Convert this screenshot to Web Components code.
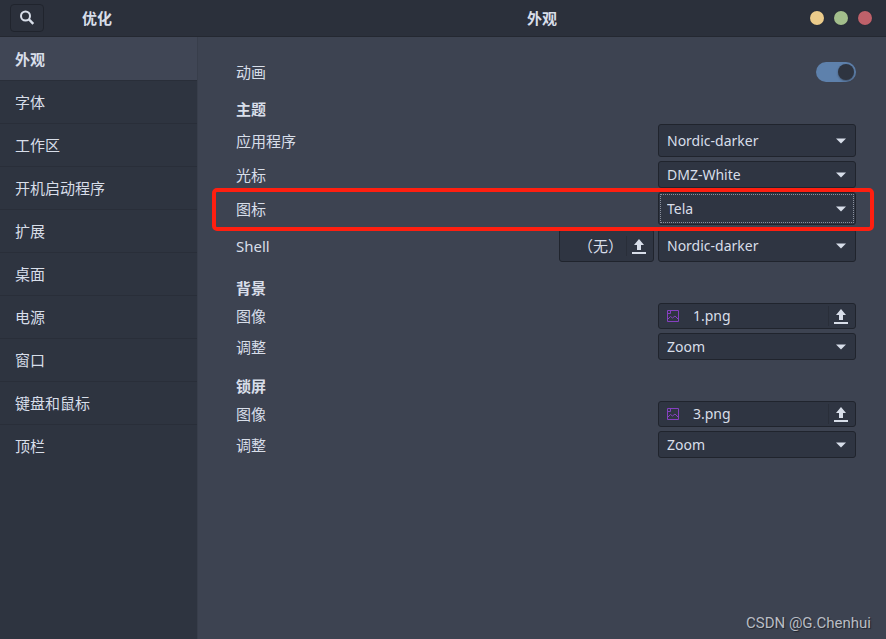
<!DOCTYPE html>
<html lang="zh-CN">
<head>
<meta charset="utf-8">
<meta name="viewport" content="width=device-width, initial-scale=1">
<title>优化</title>
<style>
    :root {
        --header: #2b303b;
        --sidebar: #2e3440;
        --content: #3d4351;
        --selected: #404655;
        --control: #2f3542;
        --line: #20242d;
        --separator: #292e39;
        --text: #d8dee9;
        --accent: #5e81ac;
        --side-width: 198px;
    }
    body {
        margin: 0;
        background: var(--content);
        color: var(--text);
        font: 15px/22px "Noto Sans", "Noto Sans CJK SC", sans-serif;
    }
</style>
</head>
<body>

<tweaks-window>
    <tweaks-header slot="header" app="优化" page="外观"></tweaks-header>
    <side-menu slot="side" items="外观,字体,工作区,开机启动程序,扩展,桌面,电源,窗口,键盘和鼠标,顶栏"></side-menu>

    <switch-row label="动画"></switch-row>
    <setting-group heading="主题">
        <choice-row label="应用程序" value="Nordic-darker" tall></choice-row>
        <choice-row label="光标" value="DMZ-White"></choice-row>
        <choice-row label="图标" value="Tela" tall focused marked></choice-row>
        <choice-row label="Shell" value="Nordic-darker" tall>
            <file-button name="（无）" compact></file-button>
        </choice-row>
    </setting-group>
    <setting-group heading="背景">
        <file-row label="图像" name="1.png"></file-row>
        <choice-row label="调整" value="Zoom"></choice-row>
    </setting-group>
    <setting-group heading="锁屏">
        <file-row label="图像" name="3.png"></file-row>
        <choice-row label="调整" value="Zoom"></choice-row>
    </setting-group>

    <span slot="credit">CSDN @G.Chenhui</span>
</tweaks-window>

<script>
const rowStyle = `
    :host {
        display: flex;
        align-items: center;
        gap: 4px;
        position: relative;
    }
    * {
        box-sizing: border-box;
    }
    label {
        flex: 1;
    }
`

class TweaksWindow extends HTMLElement {

    constructor() {
        super()
        this.attachShadow({ mode: 'open' }).innerHTML = `
            <style>
                :host {
                    display: flex;
                    flex-direction: column;
                    min-height: 100vh;
                    position: relative;
                }
                .body {
                    flex: 1;
                    display: grid;
                    grid-template-columns: var(--side-width) 1fr;
                }
                main {
                    padding: 24px 30px;
                    padding-left: 38px;
                }
                .credit {
                    position: absolute;
                    right: 15px;
                    bottom: 5px;
                    color: #b9bdc4;
                    font-family: Roboto, "Liberation Sans", sans-serif;
                    text-shadow: 1px 1px 1px #20242d;
                }
            </style>
            <slot name="header"></slot>
            <div class="body">
                <slot name="side"></slot>
                <main><slot></slot></main>
            </div>
            <div class="credit"><slot name="credit"></slot></div>
        `
    }
}

class TweaksHeader extends HTMLElement {

    constructor() {
        super()
        this.attachShadow({ mode: 'open' }).innerHTML = `
            <style>
                :host {
                    display: grid;
                    grid-template-columns: var(--side-width) 1fr;
                    background: var(--header);
                    border-bottom: 1px solid #242831;
                }
                .part {
                    display: grid;
                    grid-template-columns: 1fr auto 1fr;
                    align-items: center;
                    height: 36px;
                    padding: 0 14px;
                }
                .app {
                    padding-left: 10px;
                }
                h1, h2 {
                    margin: 0;
                    font-size: 15px;
                    font-weight: 700;
                }
                h2 {
                    grid-column: 2;
                }
                button {
                    padding: 0;
                }
                .search {
                    display: grid;
                    place-items: center;
                    width: 34px;
                    height: 28px;
                    border: 1px solid var(--line);
                    border-radius: 4px;
                    background: none;
                    color: inherit;
                }
                .dots {
                    display: flex;
                    justify-content: flex-end;
                    gap: 10px;
                }
                .dots button {
                    width: 14px;
                    height: 14px;
                    border: 0;
                    border-radius: 50%;
                    background: var(--dot);
                    box-shadow: 0 0 1px var(--line);
                }
            </style>
            <div class="part app">
                <button class="search" aria-label="搜索">
                    <svg width="16" height="16" viewBox="0 0 16 16" fill="none" stroke="currentColor" stroke-width="2">
                        <circle cx="6.500" cy="6" r="4.500"/>
                        <path d="M9.700 9.200 14.300 13.800" stroke-width="2.400"/>
                    </svg>
                </button>
                <h1>${this.getAttribute('app')}</h1>
            </div>
            <div class="part">
                <h2>${this.getAttribute('page')}</h2>
                <div class="dots">
                    <button aria-label="最小化" style="--dot: #ebcb8b"></button>
                    <button aria-label="最大化" style="--dot: #a3be8c"></button>
                    <button aria-label="关闭" style="--dot: #bf616a"></button>
                </div>
            </div>
        `
    }
}

class SideMenu extends HTMLElement {

    constructor() {
        super()
        const items = this.getAttribute('items').split(',')
        this.attachShadow({ mode: 'open' }).innerHTML = `
            <style>
                :host {
                    display: block;
                    padding-top: 1px;
                    background: var(--sidebar);
                    border-right: 1px solid #383e4b;
                }
                a {
                    display: block;
                    padding: 10px 15px;
                    border-bottom: 1px solid var(--separator);
                    color: inherit;
                    text-decoration: none;
                }
                a:last-child {
                    border-bottom: 0;
                }
                a[aria-current] {
                    background: var(--selected);
                    box-shadow: 0 -1px var(--selected);
                    font-weight: 700;
                }
            </style>
            <nav>${items.map((item, i) => this.buildLink(item, i === 0)).join('')}</nav>
        `
    }

    buildLink(item, current) {
        return `<a href="#${item}" ${current ? 'aria-current="page"' : ''}>${item}</a>`
    }
}

class SettingGroup extends HTMLElement {

    constructor() {
        super()
        this.attachShadow({ mode: 'open' }).innerHTML = `
            <style>
                :host {
                    display: flex;
                    flex-direction: column;
                    gap: 4px;
                    margin-top: 15px;
                }
                h3 {
                    margin: 0;
                    font-size: 15px;
                    font-weight: 700;
                }
            </style>
            <h3>${this.getAttribute('heading')}</h3>
            <slot></slot>
        `
    }
}

class SwitchRow extends HTMLElement {

    constructor() {
        super()
        this.attachShadow({ mode: 'open' }).innerHTML = `
            <style>
                ${rowStyle}
                input {
                    appearance: none;
                    display: flex;
                    justify-content: flex-start;
                    width: 40px;
                    height: 20px;
                    margin: 0;
                    padding: 2px;
                    border-radius: 10px;
                    background: var(--control);
                }
                input:checked {
                    justify-content: flex-end;
                    background: var(--accent);
                }
                input::before {
                    content: "";
                    width: 16px;
                    height: 16px;
                    border-radius: 50%;
                    background: var(--sidebar);
                    box-shadow: 0 1px 2px #2e344099;
                }
            </style>
            <label for="switch">${this.getAttribute('label')}</label>
            <input id="switch" type="checkbox" role="switch" checked>
        `
    }
}

/**
 * Row with a drop-down; the default slot sits between the label and the list
 */
class ChoiceRow extends HTMLElement {

    constructor() {
        super()
        this.attachShadow({ mode: 'open' }).innerHTML = `
            <style>
                ${rowStyle}
                .field {
                    display: grid;
                    align-items: center;
                    width: 198px;
                    height: 27px;
                }
                :host([tall]) .field {
                    height: 33px;
                }
                select, svg {
                    grid-area: 1 / 1;
                }
                select {
                    appearance: none;
                    width: 100%;
                    height: 100%;
                    padding: 0 8px;
                    border: 1px solid var(--line);
                    border-radius: 3px;
                    background: var(--control);
                    color: inherit;
                    font: inherit;
                    font-size: 14px;
                }
                :host([focused]) select {
                    outline: 1px dotted #8b919e;
                    outline-offset: -3px;
                }
                svg {
                    justify-self: end;
                    margin-right: 10px;
                    pointer-events: none;
                }
                :host([marked]) {
                    z-index: 1;
                }
                :host([marked])::after {
                    content: "";
                    box-sizing: border-box;
                    position: absolute;
                    inset: -4px -18px -6px -24px;
                    border: 4px solid #ff1f10;
                    border-radius: 5px;
                    pointer-events: none;
                }
            </style>
            <label for="choice">${this.getAttribute('label')}</label>
            <slot></slot>
            <div class="field">
                <select id="choice"><option>${this.getAttribute('value')}</option></select>
                <svg width="10" height="6" viewBox="0 0 10 6" fill="currentColor"><path d="M0 .5h10L5 5.500z"/></svg>
            </div>
        `
    }
}

const uploadIcon = `
    <svg width="14" height="16" viewBox="0 0 14 16" fill="currentColor">
        <path d="M7 1 12 7H9v5H5V7H2zM0 14h14v2H0z"/>
    </svg>
`

const imageIcon = `
    <svg width="12" height="12" viewBox="0 0 12 12" fill="none" stroke="#8540c0">
        <path d="M.5 .5h11v11H.5zM1 3.500h2.500V1M1 9l2.500-2.500L5.500 8 8 6l3 3"/>
    </svg>
`

class FileButton extends HTMLElement {

    // lets a <label for> point at the element
    static formAssociated = true

    constructor() {
        super()
        const compact = this.hasAttribute('compact')
        this.attachShadow({ mode: 'open', delegatesFocus: true }).innerHTML = `
            <style>
                :host {
                    display: block;
                    width: 198px;
                    height: 26px;
                }
                :host([compact]) {
                    width: 95px;
                    height: 33px;
                }
                button {
                    box-sizing: border-box;
                    display: flex;
                    align-items: center;
                    width: 100%;
                    height: 100%;
                    padding: 0;
                    border: 1px solid var(--line);
                    border-radius: 3px;
                    background: var(--control);
                    color: inherit;
                    font: inherit;
                    text-align: left;
                }
                .name {
                    flex: 1;
                    display: flex;
                    align-items: center;
                    gap: 14px;
                    padding-left: 8px;
                    font-size: 14px;
                }
                :host([compact]) .name {
                    padding-left: 18px;
                    font-size: 15px;
                }
                .open {
                    display: grid;
                    place-items: center;
                    width: 24px;
                    height: 20px;
                    padding-right: 2px;
                    border-left: 1px solid var(--separator);
                }
            </style>
            <button>
                <span class="name">${compact ? '' : imageIcon}${this.getAttribute('name')}</span>
                <span class="open">${uploadIcon}</span>
            </button>
        `
    }
}

class FileRow extends HTMLElement {

    constructor() {
        super()
        this.attachShadow({ mode: 'open' }).innerHTML = `
            <style>${rowStyle}</style>
            <label for="file">${this.getAttribute('label')}</label>
            <file-button id="file" name="${this.getAttribute('name')}"></file-button>
        `
    }
}

customElements.define('tweaks-window', TweaksWindow)
customElements.define('tweaks-header', TweaksHeader)
customElements.define('side-menu', SideMenu)
customElements.define('setting-group', SettingGroup)
customElements.define('switch-row', SwitchRow)
customElements.define('choice-row', ChoiceRow)
customElements.define('file-button', FileButton)
customElements.define('file-row', FileRow)
</script>
</body>
</html>
